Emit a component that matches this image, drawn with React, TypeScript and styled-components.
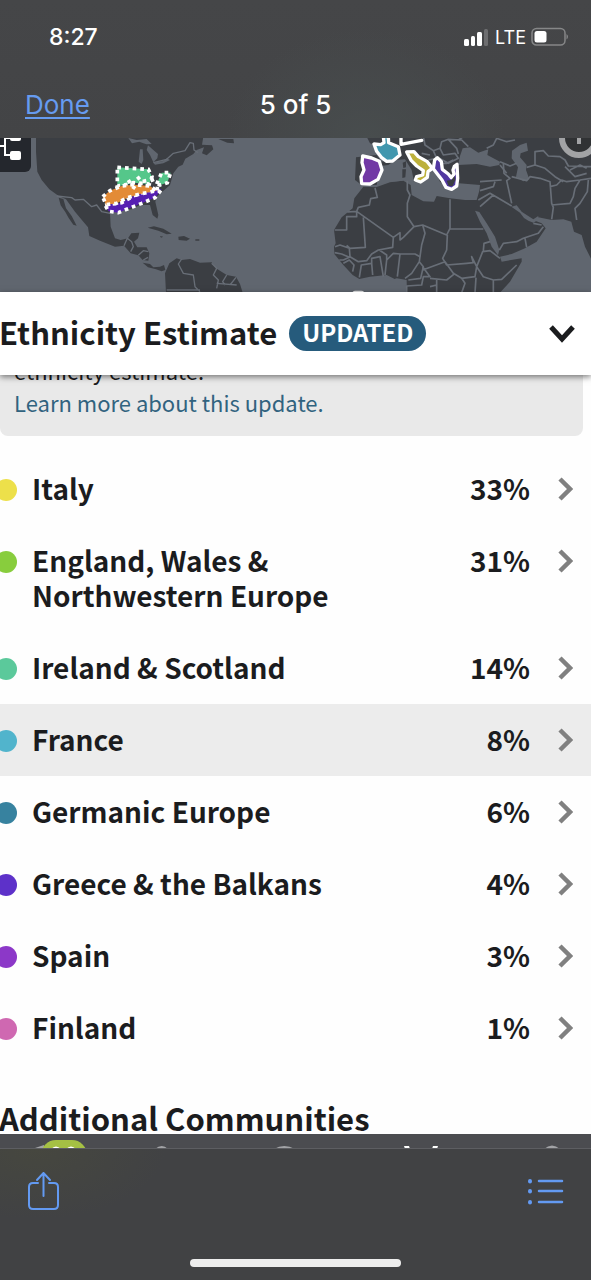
import React from "react";
import styled, { createGlobalStyle } from "styled-components";

const GlobalStyle = createGlobalStyle`
  *, *::before, *::after { box-sizing: border-box; }
  body { margin: 0; background: #fefefe; }
  button { font: inherit; color: inherit; border: 0; padding: 0; background: none; cursor: pointer; text-align: left; }
  h1, h2, p, ul { margin: 0; padding: 0; }
`;

const systemFont = `Inter, "Liberation Sans", sans-serif`;
const pageFont = `"Noto Sans CJK SC", "Noto Sans", sans-serif`;

const Screen = styled.div`
  display: flex;
  flex-direction: column;
  min-height: 100vh;
  overflow: hidden;
  background: #fefefe;
  color: #1b1c1e;
  font-family: ${pageFont};
`;

const TopBar = styled.header`
  background: radial-gradient(ellipse 140px 110px at 62% 100%, #484d4e, transparent), linear-gradient(#454648, #434446);
  color: #fff;
  font-family: ${systemFont};
`;

const StatusBar = styled.div`
  display: flex;
  align-items: center;
  justify-content: space-between;
  height: 74px;
  padding: 0 22px 0 49px;
  font-size: 23px;
  font-weight: 500;
`;

const StatusIcons = styled.div`
  display: flex;
  align-items: center;
  gap: 5px;
  font-size: 18px;
  font-weight: 400;
`;

const NavBar = styled.nav`
  display: grid;
  grid-template-columns: 1fr auto 1fr;
  align-items: center;
  height: 64px;
  padding: 0 25px 4px;
  font-size: 26px;
`;

const DoneButton = styled.button`
  justify-self: start;
  color: #669bf0;
  text-decoration: underline;
  text-decoration-thickness: 2px;
  text-underline-offset: 3px;
`;

const Counter = styled.h1`
  font-size: 26px;
  font-weight: 500;
`;

const MapPanel = styled.section`
  position: relative;
  height: 154px;
  overflow: hidden;
  background: #60666f;
`;

const MapDrawing = styled.svg`
  display: block;
  width: 100%;
  height: 100%;
`;

const TreeButton = styled.button`
  position: absolute;
  top: 0;
  left: 0;
  width: 31px;
  height: 34px;
  border-radius: 0 0 6px 0;
  background: #24272d;
`;

const InfoButton = styled.button`
  position: absolute;
  top: -20px;
  right: -8px;
  width: 40px;
  height: 40px;
  border: 6px solid #a2a3a5;
  border-radius: 50%;
  background: #303234;
  svg { display: block; margin: 0 auto; }
`;

const SectionHeader = styled.header`
  position: relative;
  display: flex;
  align-items: center;
  gap: 12px;
  height: 83px;
  padding-right: 15px;
  background: #fff;
  box-shadow: 0 2px 6px rgba(0, 0, 0, 0.5);
`;

const SectionTitle = styled.h2`
  margin-left: -1px;
  padding-bottom: 4px;
  font-size: 31px;
  font-weight: 700;
  line-height: 40px;
  white-space: nowrap;
`;

const Badge = styled.span`
  padding: 0 13px 3px;
  border-radius: 18px;
  background: #265b7c;
  color: #fff;
  font-size: 24px;
  font-weight: 700;
  line-height: 32px;
`;

const CollapseButton = styled.button`
  margin-left: auto;
  svg { display: block; }
`;

const Notice = styled.div`
  display: flex;
  flex-direction: column;
  justify-content: flex-end;
  height: 61px;
  margin-right: 8px;
  padding: 0 14px 18px;
  overflow: hidden;
  border-radius: 0 0 8px 8px;
  background: #e9e9e9;
  font-size: 22px;
  line-height: 32px;
`;

const NoticeLink = styled.a`
  color: #31637f;
  text-decoration: none;
`;

const RegionList = styled.ul`
  margin-top: 17px;
  list-style: none;
`;

const RegionRow = styled.button<{ $active?: boolean }>`
  display: flex;
  align-items: flex-start;
  width: 100%;
  padding: 18px 18px 19px 0;
  background: ${(p) => (p.$active ? "#ececec" : "transparent")};
  font-size: 28px;
  font-weight: 700;
  line-height: 35px;
`;

const Dot = styled.span<{ $color: string }>`
  flex: none;
  width: 22px;
  height: 22px;
  margin: 8px 15px 0 -5px;
  border-radius: 50%;
  background: ${(p) => p.$color};
`;

const RegionName = styled.span`
  flex: 1;
  max-width: 340px;
`;

const Percent = styled.span`
  margin-left: auto;
`;

const RowChevron = styled.svg`
  flex: none;
  margin: 6px 0 0 28px;
`;

const CommunitiesTitle = styled(SectionTitle)`
  margin-top: 34px;
  height: 36px;
`;

const TabStrip = styled.div`
  height: 15px;
  overflow: hidden;
  background: #4b4c50;
  svg { display: block; width: 100%; }
`;

const Toolbar = styled.footer`
  flex: 1;
  display: flex;
  flex-direction: column;
  justify-content: space-between;
  min-height: 131px;
  padding: 20px 26px 13px;
  background: radial-gradient(ellipse 130px 70px at 6% 0, #46473f, transparent), #414244;
`;

const ToolbarActions = styled.div`
  display: flex;
  align-items: flex-start;
  justify-content: space-between;
  color: #639af2;
  svg { display: block; }
`;

const HomeIndicator = styled.div`
  align-self: center;
  width: 211px;
  height: 8px;
  border-radius: 4px;
  background: #ededed;
`;

const regions = [
  { name: "Italy", percent: "33%", color: "#ede04a" },
  { name: "England, Wales & Northwestern Europe", percent: "31%", color: "#88cd3d" },
  { name: "Ireland & Scotland", percent: "14%", color: "#5bc99b" },
  { name: "France", percent: "8%", color: "#51b4cc", active: true },
  { name: "Germanic Europe", percent: "6%", color: "#37829f" },
  { name: "Greece & the Balkans", percent: "4%", color: "#5d31c9" },
  { name: "Spain", percent: "3%", color: "#8c38c8" },
  { name: "Finland", percent: "1%", color: "#cf68b1" },
];

const land = "#3b3e43";
const sea = "#60666f";

function WorldMap() {
  return (
    <MapDrawing viewBox="0 24 1773 462" preserveAspectRatio="xMidYMid slice" role="img" aria-label="Map of ethnicity regions">
      {/* The Americas */}
      <g fill={land}>
        <path d="M108 20V65L112 125 125 150 148 178 175 197 198 208 225 245 250 275 264 292 268 318 300 332 345 350 372 347 392 370 415 376 428 390 445 392 448 370 440 352 412 352 402 335 414 325 418 308 394 310 384 325 362 330 345 325 332 290 330 250 345 242 395 238 420 225 450 225 458 255 472 266 475 255 466 215 470 200 510 165 520 130 535 110 548 104 556 86 580 72 590 60 612 52 606 70 620 76 640 58 636 46 606 44 610 20Z" />
        <path d="M176 203L190 207 198 235 215 258 230 287 220 284 206 264 196 246 182 226Z" />
        <path d="M428 398L450 402 460 412 480 410 492 405 496 420 485 424 468 418 444 412ZM443 293L462 289 490 296 515 311 500 313 475 302ZM535 320L552 318 570 326 560 332 536 330ZM480 318L490 320 483 323ZM586 328H598V332H586Z" />
        <path d="M498 488L495 430 508 400 530 385 545 390 570 387 600 398 635 397 648 415 680 435 708 440 720 462 728 488Z" />
        <path d="M655 27H700L702 40 682 38Z" />
      </g>
      <g fill={sea}>
        <path d="M385 24L410 30 440 27 455 42 440 43 430 40 418 35 396 40ZM420 58L428 58 430 90 425 102 416 95ZM444 46L460 60 474 72 472 85 460 97 450 75 440 60ZM460 98L490 93 500 85 510 90 490 100 465 104Z" />
      </g>
      <g fill="none" stroke="#686e77" strokeWidth="4" strokeLinejoin="round">
        <path d="M170 198L215 203 225 210 250 208 275 230 290 225 305 245 330 250M460 98L500 88 520 70 555 62 570 38 580 40 582 60 594 68M372 347L382 325 395 335 400 350 392 365M415 376L430 362 445 365M430 390L444 382M545 387L535 402 550 430 580 435 585 470 600 485M635 400L650 415 640 435 655 450 650 475M680 435L668 455 675 465M708 442L690 465M650 460L710 465M500 480H600" />
      </g>
      {/* Europe, Africa and Asia */}
      <path fill={land} d="M1100 20H1780V488H1220L1218 452 1190 450 1160 435 1110 440 1078 447 1058 435 1030 405 1003 372 1002 350 1007 340 1002 300 1025 262 1058 235 1063 205 1090 170 1128 172 1170 157 1208 152V90L1190 105 1155 108 1130 165 1085 165 1065 150 1068 82 1130 75 1145 95 1165 90 1160 55 1110 40Z" />
      <g fill={sea}>
        <path d="M1142 108L1165 105 1185 90 1215 88 1235 120 1242 155 1275 150 1300 105 1320 155 1350 180 1377 160 1440 165 1438 182 1430 210 1395 210 1350 205 1310 198 1302 215 1270 214 1235 195 1232 165 1210 152 1170 155 1130 165Z" />
        <path d="M1380 78L1388 55 1410 52 1435 68 1452 62 1465 58 1462 75 1500 95 1498 105 1470 110 1430 102 1374 105ZM1536 62L1560 45 1580 38 1584 62 1562 70 1560 82 1580 105 1578 120 1588 148 1570 154 1548 140 1554 112 1535 85Z" />
        <path d="M1425 242L1438 246 1460 280 1485 320 1498 360 1494 376 1475 350 1460 310 1440 275ZM1534 230L1550 226 1565 245 1580 255 1600 268 1615 258 1614 270 1600 278 1585 272 1572 264 1560 248Z" />
        <path d="M1605 272L1615 262 1655 270 1690 268 1714 275 1722 305 1745 315 1755 350 1780 400V488H1500L1530 455 1565 395 1565 385 1505 395 1500 380 1535 372 1575 355 1610 335 1637 295 1625 280ZM1170 452L1190 445 1220 450V488H1170Z" />
      </g>
      <path fill={land} d="M1208 98L1218 94 1218 112 1210 114ZM1207 118H1218L1216 142 1207 144Z" />
      <g fill="none" stroke="#686e77" strokeWidth="5" strokeLinejoin="round">
        <path d="M1125 174L1132 202 1112 206 1108 225 1075 232 1070 244 1042 246M1070 244V260H1040V300H1004M1070 244L1180 322 1200 308 1200 330 1210 322 1242 290 1268 285 1340 315 1350 295 1350 208M1090 262L1096 352 1050 355 1040 346M1180 322L1178 352 1135 360 1115 372 1100 392 1075 395 1050 380 1048 355 1020 345 1005 350M1004 368L1025 372 1048 382 1030 390 1018 390M1030 400L1048 390 1062 405 1058 425M1078 442L1084 405 1115 400 1118 435M1115 400V385L1140 380 1150 440M1138 360L1160 375 1160 390 1155 435M1160 390L1180 370 1200 372 1192 440M1200 372L1245 372 1260 380 1258 395 1235 430 1215 445M1258 395L1270 410 1262 445 1225 450" />
        <path d="M1268 285L1275 310 1265 345 1260 380M1222 152V180L1230 195 1222 220 1222 260 1242 290M1350 297H1450M1342 315L1340 360 1328 385 1340 405 1400 400 1420 398 1415 380 1430 410M1268 410L1290 440 1270 440 1265 465 1220 468V488M1268 420L1335 395 1360 430 1385 445 1425 440 1430 410 1448 365 1470 362 1500 385M1290 445L1340 450 1365 430M1385 445L1395 460 1385 488M1430 410L1450 440 1480 450 1505 448 1550 405M1428 443L1425 488M1480 450V488M1450 362L1452 340 1470 335M1310 450L1310 488M1290 470L1310 465" />
        <path d="M1505 150L1440 155M1510 100L1512 130 1530 145 1520 152 1535 220M1440 182L1480 170 1485 155M1435 210L1470 190 1535 228M1480 195L1440 230M1498 360L1510 340 1550 335 1570 325 1615 310 1630 290M1575 325L1580 352M1600 280L1625 285M1535 140L1580 152 1590 140 1620 145 1650 155 1655 220 1660 232 1655 268M1650 170L1670 165 1685 150 1700 155 1740 150 1725 175 1720 200 1710 220 1655 225M1765 150L1762 185 1740 220 1725 235 1730 270M1580 112L1605 105 1635 115 1665 140 1690 155M1605 105L1605 65 1630 62 1645 78 1680 80 1695 90 1705 108 1773 110M1695 110L1725 140 1760 130M1710 120L1740 105 1760 115M1740 150L1773 145" />
        <path d="M1270 20L1275 45 1300 62 1310 85 1285 90M1300 62L1320 55 1330 75 1365 70 1375 85 1345 100 1318 85M1320 55L1325 35 1345 28 1385 30 1405 50M1345 28L1370 55 1375 72M1460 55L1480 45 1490 25 1520 35 1545 30M1500 95L1530 108 1550 100M1500 105L1520 130M1265 70L1290 75M1300 100H1340L1360 90M1375 30L1390 20" />
      </g>
      {/* Highlighted regions in the eastern United States */}
      <g strokeWidth="11" strokeDasharray="11 12" stroke="#fff">
        <path fill="#55c78a" d="M352 112L445 118 456 140 448 162 400 158 370 166 352 168Z" />
        <path fill="#55c78a" d="M470 162L485 128 512 128 502 158 480 165Z" />
        <path fill="#561eb2" d="M315 225L365 218 400 198 465 175 485 178 465 203 425 220 382 237 355 248 326 244Z" />
        <path fill="#e38b36" d="M308 200L330 182 365 168 400 164 450 168 470 182 420 192 380 204 350 220 318 224Z" />
        <path fill="none" d="M385 150L395 168 415 182M412 140L425 155 448 150M455 145L460 158" />
      </g>
      {/* Highlighted regions in Europe */}
      <g stroke="#fff" strokeWidth="10" strokeLinejoin="round" strokeLinecap="round">
        <path fill="#7138a5" d="M1088 78L1115 84 1138 94 1146 120 1134 148 1110 162 1085 161 1083 140 1092 120 1086 98Z" />
        <path fill="#4197ae" d="M1122 42L1142 44 1152 38 1150 20H1165L1166 38 1195 50 1200 75 1178 93 1160 94 1144 82 1130 64Z" />
        <path fill="#bdb13b" d="M1220 66L1242 65 1255 80 1282 95 1297 115 1284 125 1282 142 1262 156 1246 150 1250 140 1268 135 1270 122 1250 108 1234 92Z" />
        <path fill="none" d="M1203 20V43L1265 31" />
        <path fill="#5137a1" d="M1300 116L1304 90 1312 83 1324 95 1327 118 1345 132 1354 143 1362 132 1359 120 1363 109 1371 103 1373 145 1370 168 1355 178 1338 172 1326 150Z" />
        <path fill={land} stroke="none" d="M1340 152L1354 150 1364 138 1366 150 1358 168 1346 168Z" />
      </g>
      <path fill="#e4e5e6" d="M1058 486Q1060 482 1066 482H1084Q1090 482 1092 486Z" />
    </MapDrawing>
  );
}

export default function App() {
  return (
    <Screen>
      <GlobalStyle />
      <TopBar>
        <StatusBar>
          <span>8:27</span>
          <StatusIcons>
            <svg width="27" height="18" viewBox="0 0 27 18" aria-label="Signal">
              <g fill="#fff">
                <rect x="1" y="11" width="5" height="7" rx="1.5" />
                <rect x="8" y="8" width="4" height="10" rx="1.5" />
                <rect x="14" y="4" width="5" height="14" rx="1.5" />
                <rect x="21" y="1" width="4" height="17" rx="1.5" opacity=".22" />
              </g>
            </svg>
            <span>LTE</span>
            <svg width="38" height="20" viewBox="0 0 38 20" aria-label="Battery">
              <rect x="1" y="1.5" width="33" height="16.5" rx="4.5" fill="none" stroke="#868788" strokeWidth="1.5" />
              <rect x="3.5" y="4" width="12" height="11.5" rx="2.5" fill="#fff" />
              <path d="M35.500 7Q38.500 9.500 35.500 12.500Z" fill="#868788" />
            </svg>
          </StatusIcons>
        </StatusBar>
        <NavBar>
          <DoneButton>Done</DoneButton>
          <Counter>5 of 5</Counter>
        </NavBar>
      </TopBar>

      <main>
        <MapPanel>
          <WorldMap />
          <TreeButton aria-label="Family tree">
            <svg width="31" height="34" viewBox="0 0 31 34">
              <path d="M0 8H5M12 0H5V17H12" fill="none" stroke="#fff" strokeWidth="2" />
              <rect x="10" y="-6" width="11" height="9" rx="2" fill="#fff" />
              <rect x="10" y="13" width="11" height="9" rx="2" fill="#fff" />
            </svg>
          </TreeButton>
          <InfoButton aria-label="Map information">
            <svg width="10" height="28" viewBox="0 0 10 28">
              <path d="M5 0V20" stroke="#a2a3a5" strokeWidth="4" />
            </svg>
          </InfoButton>
        </MapPanel>

        <SectionHeader>
          <SectionTitle>Ethnicity Estimate</SectionTitle>
          <Badge>UPDATED</Badge>
          <CollapseButton aria-label="Collapse section">
            <svg width="28" height="20" viewBox="0 0 28 20">
              <path d="M3 3L14 15 25 3" fill="none" stroke="#1b1c1e" strokeWidth="5" />
            </svg>
          </CollapseButton>
        </SectionHeader>

        <Notice>
          <p>ethnicity estimate.</p>
          <NoticeLink href="#update">Learn more about this update.</NoticeLink>
        </Notice>

        <RegionList>
          {regions.map((r) => (
            <li key={r.name}>
              <RegionRow $active={r.active}>
                <Dot $color={r.color} />
                <RegionName>{r.name}</RegionName>
                <Percent>{r.percent}</Percent>
                <RowChevron width="15" height="24" viewBox="0 0 15 24" aria-hidden="true">
                  <path d="M2 2L12 12 2 22" fill="none" stroke="#808080" strokeWidth="4.500" />
                </RowChevron>
              </RegionRow>
            </li>
          ))}
        </RegionList>

        <CommunitiesTitle>Additional Communities</CommunitiesTitle>
      </main>

      <TabStrip>
        <svg height="15" viewBox="0 0 591 15" aria-hidden="true">
          <g fill="#a2a3a6">
            <path d="M32 15L44 11V15ZM133 15Q136 14 138 15ZM155 15Q162 9 168 15ZM274 15Q284 9 295 15ZM544 15Q552 8 560 15Z" />
          </g>
          <rect x="41" y="6" width="46" height="30" rx="15" fill="#a5c044" />
          <path d="M51 15Q56 10 61 15ZM66 15Q71 10 76 15ZM404 12H409L410 15H405ZM433 12H438L437 15H432Z" fill="#fff" />
          <path d="M0 14.500H591" stroke="#5d5e62" />
        </svg>
      </TabStrip>

      <Toolbar>
        <ToolbarActions>
          <button aria-label="Share">
            <svg width="34" height="42" viewBox="0 0 34 42" fill="none" stroke="currentColor" strokeWidth="2" strokeLinecap="round" strokeLinejoin="round">
              <path d="M12 14H7Q3 14 3 18V36Q3 40 7 40H28Q32 40 32 36V18Q32 14 28 14H23M17.500 27V4M11 11L17.500 4 24 11" />
            </svg>
          </button>
          <button aria-label="List">
            <svg width="37" height="42" viewBox="0 0 37 42" fill="none" stroke="currentColor" strokeWidth="2.500" strokeLinecap="round">
              <path d="M11 12H34M11 22H34M11 33H34" />
              <path d="M2 12V12.500M2 22V22.500M2 33V33.500" strokeWidth="4" />
            </svg>
          </button>
        </ToolbarActions>
        <HomeIndicator />
      </Toolbar>
    </Screen>
  );
}
